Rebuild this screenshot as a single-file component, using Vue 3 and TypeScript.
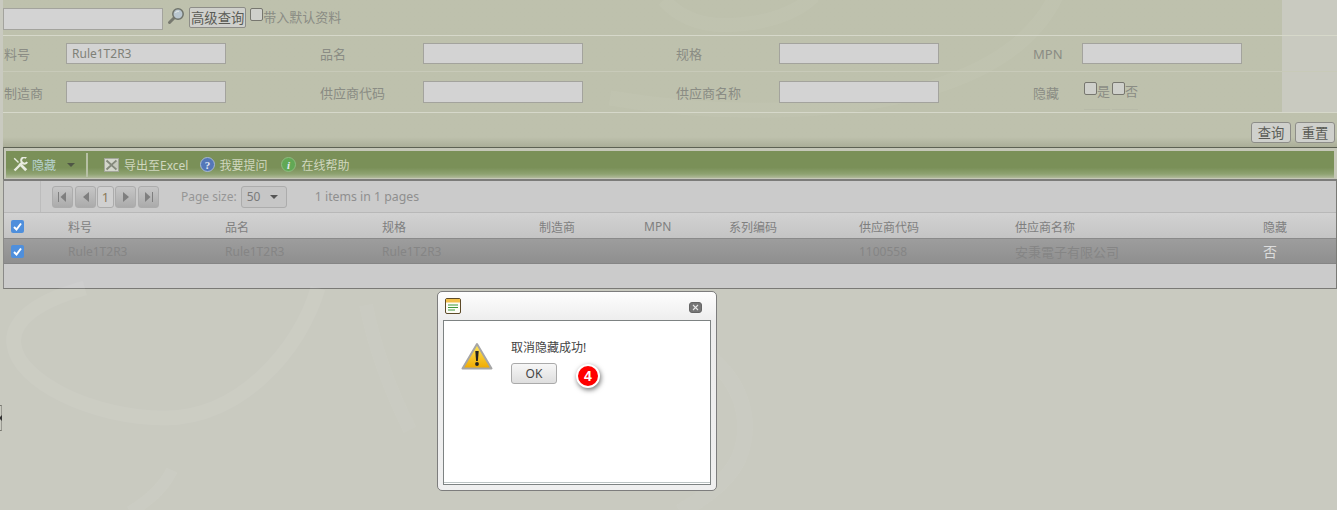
<template>
  <div class="page">
    <svg class="decor" width="1337" height="510" viewBox="0 0 1337 510">
      <g fill="none" stroke="#fff">
        <path d="M664 0 C680 18 700 25 725 25 C760 25 795 15 814 -4" stroke-opacity="0.09" stroke-width="14" />
        <path d="M1056 -4 C1035 40 990 70 930 88 C860 110 740 120 610 98" stroke-opacity="0.09" stroke-width="15" />
        <path d="M318 288 C300 350 240 418 165 418 C90 418 18 380 14 345 C10 320 40 300 85 288" stroke-opacity="0.06" stroke-width="15" />
        <path d="M366 305 C375 350 390 390 410 430" stroke-opacity="0.035" stroke-width="14" />
        <path d="M706 355 C740 380 755 420 738 460 C725 485 700 500 680 512" stroke-opacity="0.035" stroke-width="16" />
        <path d="M172 470 C165 485 150 500 130 512" stroke-opacity="0.05" stroke-width="12" />
      </g>
    </svg>
    <span class="splitter"></span>

    <section class="query">
      <div class="search-row">
        <input class="field search" />
        <svg class="lens" width="18" height="18" viewBox="0 0 18 18">
          <path d="M7.5 10.5 L2.5 15.5" stroke="#77796f" stroke-width="3" stroke-linecap="round" />
          <circle cx="11" cy="7" r="5.2" fill="#b9c6cf" stroke="#6f736b" stroke-width="1.5" />
          <path d="M8.5 6 C9 4.5 10.5 4 12 4.3" stroke="#e6ebe8" fill="none" />
        </svg>
        <button class="native adv">高级查询</button>
        <label class="check-label"><span class="box"></span>带入默认资料</label>
      </div>
      <div class="form-row first">
        <template v-for="f in rowOne" :key="f.label">
          <span class="label">{{ f.label }}</span>
          <input class="field" :value="f.value" />
        </template>
      </div>
      <div class="form-row second">
        <template v-for="f in rowTwo" :key="f.label">
          <span class="label">{{ f.label }}</span>
          <input class="field" />
        </template>
        <span class="label">隐藏</span>
        <div class="yesno">
          <label class="check-label"><span class="box"></span>是</label>
          <label class="check-label"><span class="box"></span>否</label>
        </div>
      </div>
      <div class="action-row">
        <button class="native">查询</button>
        <button class="native">重置</button>
      </div>
    </section>

    <div class="toolbar-wrap">
      <div class="toolbar">
        <span class="tool first-tool">
          <svg width="15" height="15" viewBox="0 0 15 15" fill="none" stroke="#e8ebe0">
            <path d="M1.5 13.5 L10 5" stroke-width="2.4" />
            <path d="M13.3 0.9 A3.2 3.2 0 1 0 14.2 5" stroke-width="2" />
            <path d="M1.2 1.2 L5.5 5.5" stroke-width="1.4" />
            <path d="M6.5 6.5 L13.2 13.2" stroke-width="2.8" />
          </svg>
          <span class="tool-blue">隐藏</span>
          <i class="caret"></i>
        </span>
        <span class="sep"></span>
        <span class="tool excel">
          <svg width="15" height="14" viewBox="0 0 15 14">
            <rect x="0.5" y="0.5" width="14" height="13" fill="#d4d7cc" stroke="#a2a699" />
            <path d="M2.5 2.5 L12.5 11.5 M12.5 2.5 L2.5 11.5" stroke="#858a7c" stroke-width="2" />
            <path d="M9 7 L14 2.5 V11.5 Z" fill="#c6c9bd" />
          </svg>
          导出至Excel
        </span>
        <span class="tool ask">
          <svg width="15" height="15" viewBox="0 0 15 15">
            <circle cx="7.5" cy="7.5" r="7" fill="#5477b8" stroke="#a9b9d2" />
            <text x="7.5" y="11.5" text-anchor="middle" class="glyph">?</text>
          </svg>
          我要提问
        </span>
        <span class="tool">
          <svg width="15" height="15" viewBox="0 0 15 15">
            <circle cx="7.5" cy="7.5" r="7" fill="#62a855" stroke="#8fbb80" />
            <text x="7.5" y="11.5" text-anchor="middle" class="glyph italic">i</text>
          </svg>
          在线帮助
        </span>
      </div>
    </div>

    <div class="grid">
      <div class="pager">
        <div class="pager-gutter"></div>
        <div class="pager-btns">
          <span class="pbtn"><svg width="9" height="10" viewBox="0 0 9 10"><path d="M0.5 0V10" stroke="#7f7f7f" /><path d="M8 0V10L2.5 5Z" fill="#7f7f7f" /></svg></span>
          <span class="pbtn"><svg width="6" height="10" viewBox="0 0 6 10"><path d="M6 0V10L0 5Z" fill="#7f7f7f" /></svg></span>
          <span class="pnum">1</span>
          <span class="pbtn"><svg width="6" height="10" viewBox="0 0 6 10"><path d="M0 0V10L6 5Z" fill="#7f7f7f" /></svg></span>
          <span class="pbtn"><svg width="9" height="10" viewBox="0 0 9 10"><path d="M8.5 0V10" stroke="#7f7f7f" /><path d="M1 0V10L6.5 5Z" fill="#7f7f7f" /></svg></span>
        </div>
        <span class="psize">Page size:</span>
        <span class="pselect">50<i class="caret dark"></i></span>
        <span class="pinfo">1 items in 1 pages</span>
      </div>
      <div class="grid-row head">
        <span class="cb-cell"><span class="tick"><svg width="13" height="13" viewBox="0 0 13 13"><path d="M3 7 L5.5 9.5 L10 3.5" fill="none" stroke="#fff" stroke-width="2" /></svg></span></span>
        <span v-for="c in columns" :key="c">{{ c }}</span>
      </div>
      <div class="grid-row selected">
        <span class="cb-cell"><span class="tick"><svg width="13" height="13" viewBox="0 0 13 13"><path d="M3 7 L5.5 9.5 L10 3.5" fill="none" stroke="#fff" stroke-width="2" /></svg></span></span>
        <span v-for="(v, i) in record" :key="i" :class="{ company: i === 7, light: i === 8 }">{{ v }}</span>
      </div>
    </div>

    <div class="dialog">
      <div class="dialog-title">
        <svg width="16" height="16" viewBox="0 0 16 16">
          <rect x="0.5" y="0.5" width="15" height="15" rx="1.5" fill="#fdfdf6" stroke="#5d4a28" />
          <rect x="1" y="1" width="14" height="3.5" fill="#f2c04a" />
          <path d="M3 7H13M3 9.5H13M3 12H10" stroke="#3f9a3a" />
        </svg>
        <span class="dialog-close">
          <svg width="7" height="7" viewBox="0 0 7 7"><path d="M1 1L6 6M6 1L1 6" stroke="#e8e8e8" stroke-width="1.1" /></svg>
        </span>
      </div>
      <div class="dialog-body">
        <svg class="warn" width="32" height="28" viewBox="0 0 32 28">
          <defs>
            <linearGradient id="warnFill" x1="0" y1="0" x2="0" y2="1">
              <stop offset="0" stop-color="#ffe85f" />
              <stop offset="1" stop-color="#efa900" />
            </linearGradient>
          </defs>
          <path d="M16 2 L30.5 26.5 H1.5 Z" fill="url(#warnFill)" stroke="#a6a6a6" stroke-width="2" stroke-linejoin="round" />
          <path d="M14.3 9 H17.7 L16.9 19 H15.1 Z" fill="#222" />
          <circle cx="16" cy="22" r="1.9" fill="#222" />
        </svg>
        <div class="dialog-msg">
          <p>取消隐藏成功!</p>
          <button class="ok">OK</button>
        </div>
      </div>
    </div>
    <span class="badge">4</span>
  </div>
</template>

<script setup lang="ts">
interface FormField {
  label: string
  value?: string
}

const rowOne: FormField[] = [
  { label: '料号', value: 'Rule1T2R3' },
  { label: '品名' },
  { label: '规格' },
  { label: 'MPN' },
]

const rowTwo: FormField[] = [
  { label: '制造商' },
  { label: '供应商代码' },
  { label: '供应商名称' },
]

const columns = ['料号', '品名', '规格', '制造商', 'MPN', '系列编码', '供应商代码', '供应商名称', '隐藏']
const record = ['Rule1T2R3', 'Rule1T2R3', 'Rule1T2R3', '', '', '', '1100558', '安秉電子有限公司', '否']
</script>

<style>
html,
body {
  margin: 0;
  background: #c9cac0;
}
</style>

<style scoped>
.page {
  position: relative;
  width: 1337px;
  height: 510px;
  overflow: hidden;
  background: #c9cac0;
  font-family: "Noto Sans", "Noto Sans CJK SC", sans-serif;
  font-size: 12px;
  color: #8a8c84;
}

.decor {
  position: absolute;
  left: 0;
  top: 0;
}

.splitter {
  position: absolute;
  left: 0;
  top: 405px;
  box-sizing: border-box;
  width: 2px;
  height: 26px;
  border-top: 1px solid #77776f;
  border-bottom: 1px solid #77776f;
  border-right: 1px solid #9a9a92;
}

.splitter::after {
  content: "";
  position: absolute;
  left: -1px;
  top: 9px;
  border-top: 3px solid transparent;
  border-bottom: 3px solid transparent;
  border-right: 3px solid #333;
}

.query {
  position: relative;
  margin-left: 3px;
  height: 147px;
  background-image:
    linear-gradient(rgba(179, 184, 154, 0.5), rgba(179, 184, 154, 0.5)),
    linear-gradient(to bottom, rgba(179, 184, 154, 0.5) 0, rgba(179, 184, 154, 0.5) 24px, rgba(150, 155, 125, 0.6) 34px);
  background-size: 1279px 113px, 100% 34px;
  background-position: 0 0, 0 113px;
  background-repeat: no-repeat;
}

.search-row {
  display: flex;
  align-items: center;
  height: 35px;
  border-bottom: 1px solid #d6d8ca;
}

.field {
  box-sizing: border-box;
  width: 160px;
  height: 21px;
  border: 1px solid #a3a39d;
  background: #d3d3d3;
  padding: 0 5px;
  font: inherit;
  font-size: 12px;
  color: #7f8178;
  outline: none;
}

.search {
  height: 22px;
  margin-top: 3px;
}

.second .field {
  height: 22px;
}

.lens {
  margin: -3px 0 0 4px;
}

.native {
  font-family: "Noto Sans CJK SC", sans-serif;
  font-size: 13.33px;
  line-height: 17px;
  height: 21px;
  padding: 0 1px;
  border: 1px solid #8d8d88;
  border-radius: 2px;
  background: #cfd0cc;
  color: #5a5b55;
}

.adv {
  margin-left: 4px;
}

.check-label {
  display: inline-flex;
  align-items: center;
  font-size: 13px;
  color: #8a8c84;
}

.box {
  box-sizing: border-box;
  width: 13px;
  height: 13px;
  border: 1px solid #77776f;
  border-radius: 2px;
  background: #cfd0cb;
  align-self: flex-start;
  margin-top: 1px;
}

.search-row .check-label {
  margin: -2px 0 0 4px;
}

.form-row {
  display: grid;
  grid-template-columns: 63px 254px 103px 253px 103px 254px 49px 1fr;
  align-items: center;
  justify-items: start;
  font-size: 13px;
}

.first {
  height: 35px;
  border-bottom: 1px solid #c8cab9;
}

.second {
  height: 40px;
  border-bottom: 1px solid #d6d8ca;
}

.label:first-child {
  padding-left: 1px;
}

.yesno {
  display: flex;
  gap: 2px;
  margin: -2px 0 0 2px;
}

.yesno .check-label {
  padding-bottom: 9px;
  margin-bottom: -9px;
  border-bottom: 1px solid #b7baa8;
}

.action-row {
  display: flex;
  justify-content: flex-end;
  gap: 4px;
  padding: 9px 2px 0 0;
}

.action-row .native {
  width: 40px;
  padding: 0;
  border-radius: 3px;
}

.toolbar-wrap {
  margin-left: 3px;
  box-sizing: border-box;
  height: 32px;
  padding: 3px 3px 0 2px;
  border-top: 1px solid #5d6153;
  border-left: 1px solid #6f7367;
  background: #c5c7b8;
}

.toolbar {
  display: flex;
  align-items: center;
  height: 27px;
  background: linear-gradient(to bottom, #7a9058 0, #7a9058 62%, #8ea271 85%, #b0b99a 100%);
  color: #d0d7bf;
}

.tool {
  display: inline-flex;
  align-items: center;
  gap: 5px;
}

.first-tool {
  gap: 4px;
  margin: 0 0 0 7px;
}

.tool-blue {
  color: #b7d3d2;
}

.caret {
  width: 0;
  height: 0;
  margin-left: 7px;
  border-left: 4px solid transparent;
  border-right: 4px solid transparent;
  border-top: 4px solid #4f5645;
}

.caret.dark {
  border-top-color: #555;
  margin-left: 10px;
}

.sep {
  width: 2px;
  height: 24px;
  margin: 0 16px 0 11px;
  background: #b7c0a5;
}

.excel {
  margin-right: 12px;
}

.ask {
  gap: 4px;
  margin-right: 14px;
}

.glyph {
  font-family: "Liberation Serif", serif;
  font-size: 11px;
  font-weight: 700;
  fill: #e6eaf2;
}

.italic {
  font-style: italic;
}

.grid {
  margin-left: 3px;
  height: 110px;
  box-sizing: border-box;
  border: 1px solid #7a7a76;
  border-left-color: #8a8a88;
  border-top: 2px solid #7c7c7a;
  background: #cbcbcb;
}

.pager {
  display: flex;
  align-items: center;
  height: 31px;
  border-bottom: 1px solid #b8b8b8;
}

.pager-gutter {
  width: 36px;
  height: 100%;
  border-right: 1px solid #bcbcbc;
}

.pager-btns {
  display: flex;
  gap: 2px;
  margin: 0 22px 0 11px;
}

.pbtn,
.pnum {
  box-sizing: border-box;
  display: inline-flex;
  align-items: center;
  justify-content: center;
  width: 21px;
  height: 22px;
  border: 1px solid #acacac;
  border-radius: 3px;
  background: linear-gradient(#c6c6c6, #ababab);
}

.pnum {
  width: 17px;
  margin: 0 -1px;
  background: #d0d0d0;
  color: #8a7a5a;
  font-size: 13px;
}

.psize {
  font-size: 12px;
  color: #969696;
  margin-right: 4px;
}

.pselect {
  box-sizing: border-box;
  display: inline-flex;
  align-items: center;
  width: 46px;
  height: 22px;
  padding-left: 5px;
  border: 1px solid #acacac;
  border-radius: 3px;
  background: #c6c6c6;
  color: #7a7a7a;
}

.pinfo {
  margin-left: 28px;
  font-size: 12.3px;
  color: #8f8f8f;
}

.grid-row {
  display: grid;
  grid-template-columns: 64px 157px 157px 157px 105px 85px 130px 156px 248px 1fr;
  align-items: center;
  justify-items: start;
}

.head {
  box-sizing: border-box;
  height: 25px;
  padding-top: 2px;
  background: linear-gradient(#d2d2d2, #c4c4c4);
  color: #7f7f7f;
}

.selected {
  box-sizing: border-box;
  height: 26px;
  background: linear-gradient(#9d9d9d, #8f8f8f);
  border-top: 1px solid #8a8a8a;
  border-bottom: 1px solid #858585;
  color: #858585;
}

.company {
  font-size: 13px;
}

.light {
  color: #dcdcdc;
  font-size: 14px;
}

.cb-cell {
  padding-left: 7px;
  display: flex;
}

.tick {
  display: inline-flex;
  width: 13px;
  height: 13px;
  border-radius: 2px;
  background: #4f8fdc;
}

.dialog {
  position: absolute;
  left: 437px;
  top: 291px;
  box-sizing: border-box;
  width: 280px;
  height: 200px;
  padding: 0 5px 5px;
  display: flex;
  flex-direction: column;
  border: 1px solid #7d7d7d;
  border-radius: 5px;
  background: linear-gradient(#fefefe, #ededed 29px, #efefef);
  color: #444;
}

.dialog-title {
  display: flex;
  align-items: center;
  justify-content: space-between;
  height: 28px;
  padding: 0 2px;
}

.dialog-close {
  box-sizing: border-box;
  display: inline-flex;
  align-items: center;
  justify-content: center;
  width: 13px;
  height: 11px;
  margin: 2px 7px 0 0;
  border: 1px solid #666;
  border-radius: 3px;
  background: #777;
}

.dialog-body {
  flex: 1;
  display: flex;
  border: 1px solid #7d8282;
  background: #fff;
  box-shadow: inset 0 -1px 0 #fff, inset 0 -2px 0 #bcc4c4;
}

.warn {
  margin: 21px 0 0 17px;
}

.dialog-msg {
  margin: 19px 0 0 18px;
}

.dialog-msg p {
  margin: 0 0 7px;
  font-size: 12px;
  line-height: 16px;
  color: #444;
}

.ok {
  box-sizing: border-box;
  width: 46px;
  height: 21px;
  padding: 0;
  border: 1px solid #aaa;
  border-radius: 3px;
  background: linear-gradient(#f7f7f7, #dedede);
  font: inherit;
  color: #444;
}

.badge {
  position: absolute;
  left: 576px;
  top: 364px;
  box-sizing: border-box;
  width: 24px;
  height: 24px;
  border: 2px solid #fff;
  border-radius: 50%;
  background: #f00;
  box-shadow: 1px 2px 5px rgba(0, 0, 0, 0.55);
  color: #fff;
  font-family: "Liberation Sans", sans-serif;
  font-size: 14px;
  font-weight: 700;
  line-height: 20px;
  text-align: center;
}
</style>
